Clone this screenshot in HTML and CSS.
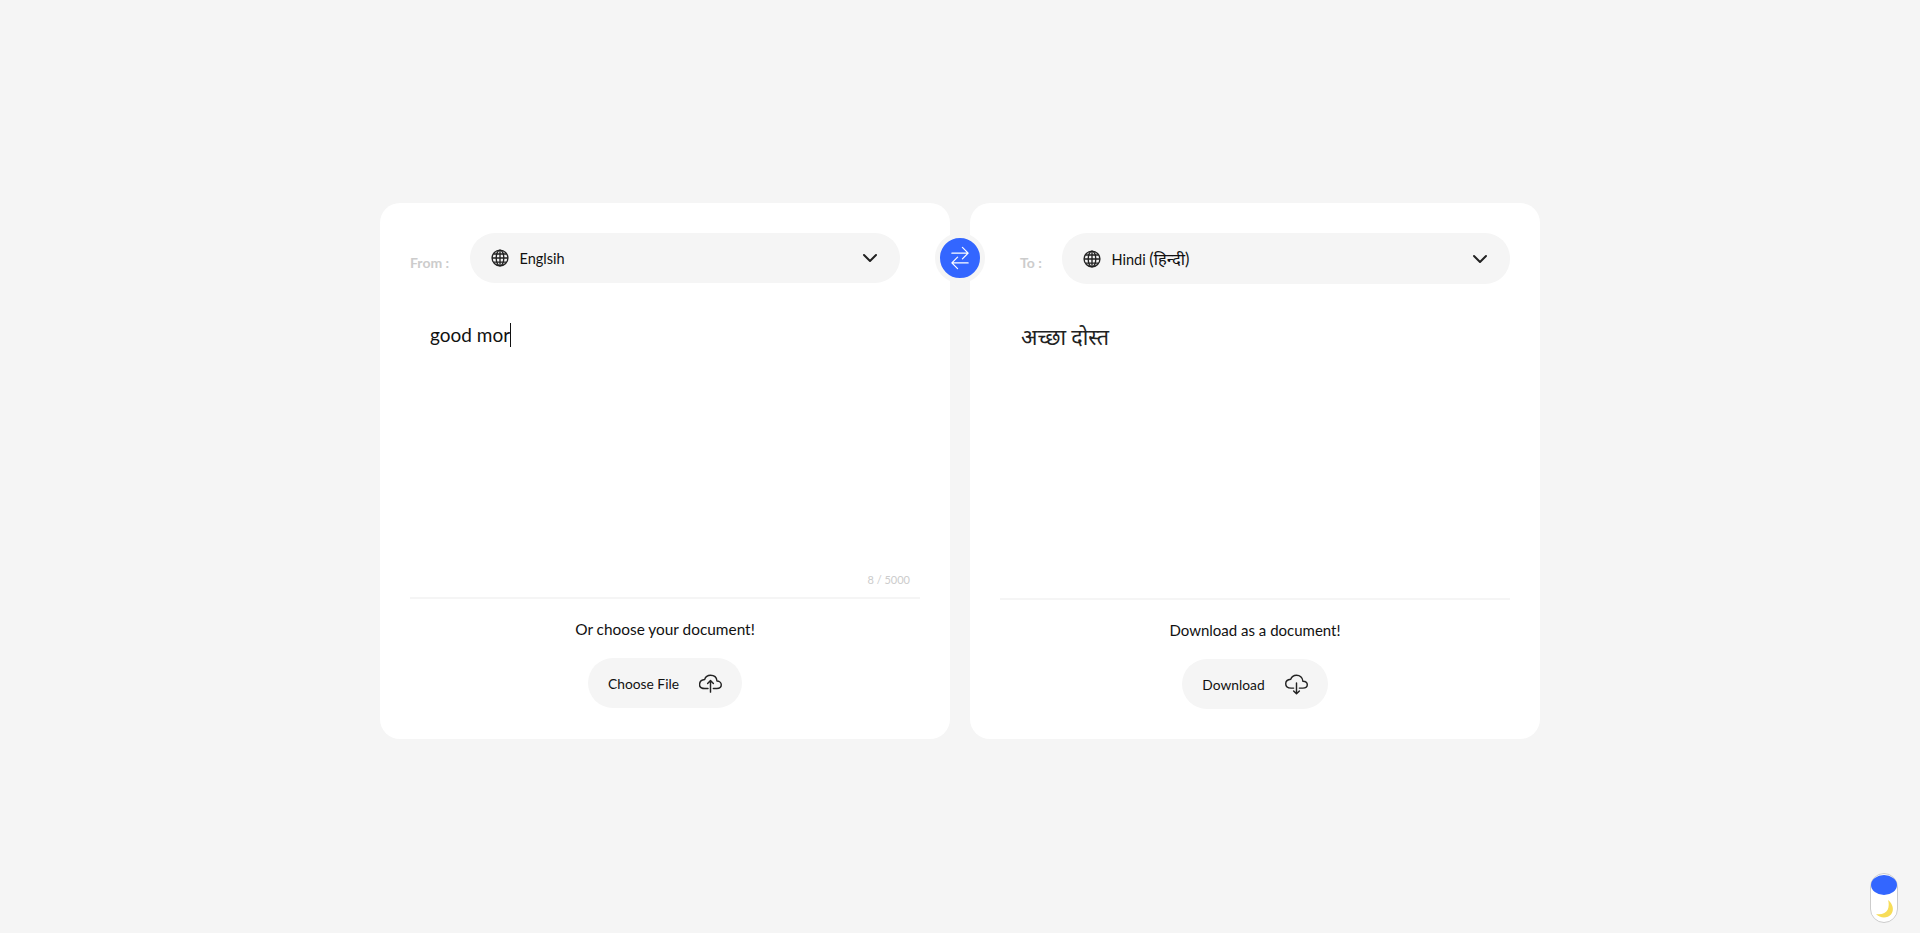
FILE: index.html
```html
<!DOCTYPE html>
<html lang="en">
<head>
<meta charset="UTF-8" />
<meta name="viewport" content="width=device-width, initial-scale=1" />
<title>Translator</title>
<link rel="stylesheet" href="styles.css">
</head>
<body>
<div class="container">
    <section class="card">
        <div class="card-head">
            <span class="lang-label">From :</span>
            <div class="lang-select lang-select-from">
                <svg class="globe" viewBox="0 0 20 20"><circle cx="10" cy="10" r="8.8"/><ellipse cx="10" cy="10" rx="4.2" ry="8.8"/><path d="M10 1.200v17.600M1.200 10h17.600M2.800 5.500h14.400M2.800 14.500h14.400"/></svg>
                <span class="lang-name">Englsih</span>
                <svg class="chevron" viewBox="0 0 16 10"><path d="M2 2l6 6 6-6"/></svg>
            </div>
        </div>
        <div class="card-body">
            <div class="source-text">good mor<span class="caret"></span></div>
            <div class="counter">8 / 5000</div>
        </div>
        <div class="card-foot">
            <p class="foot-text">Or choose your document!</p>
            <button class="file-btn" type="button">
                Choose File
                <svg class="cloud" viewBox="0 0 512 512"><path d="M320 367.79h76c55 0 100-29.21 100-83.6 0-53.76-53-81.6-96-83.6-8.89-85.3-70-127.59-144-127.59-70 0-115.09 46.21-130 92-61.44 5.84-114 44-114 119.19 0 75.21 56 83.6 120 83.6h68"/><path d="M320 255.79l-64-64-64 64M256 448.21V207.79"/></svg>
            </button>
        </div>
    </section>

    <button class="swap-btn" type="button" aria-label="Swap">
        <svg viewBox="0 0 512 512"><path d="M304 48l112 112-112 112M398.87 160H96M208 464L96 352l112-112M114 352h302"/></svg>
    </button>

    <section class="card card-to">
        <div class="card-head">
            <span class="lang-label">To :</span>
            <div class="lang-select">
                <svg class="globe" viewBox="0 0 20 20"><circle cx="10" cy="10" r="8.8"/><ellipse cx="10" cy="10" rx="4.2" ry="8.8"/><path d="M10 1.200v17.600M1.200 10h17.600M2.800 5.500h14.400M2.800 14.500h14.400"/></svg>
                <span class="lang-name">Hindi <span class="lang-native">(हिन्दी)</span></span>
                <svg class="chevron" viewBox="0 0 16 10"><path d="M2 2l6 6 6-6"/></svg>
            </div>
        </div>
        <div class="card-body">
            <div class="target-text">अच्छा दोस्त</div>
        </div>
        <div class="card-foot">
            <p class="foot-text">Download as a document!</p>
            <button class="file-btn" type="button">
                Download
                <svg class="cloud" viewBox="0 0 512 512"><path d="M320 336h76c55 0 100-21.21 100-75.6s-53-73.47-96-75.6C391.11 99.74 329 48 256 48c-69 0-113.44 45.79-128 91.2-60 5.7-112 35.88-112 98.4S70 336 136 336h56"/><path d="M192 400.1l64 63.9 64-63.9M256 224v224.03"/></svg>
            </button>
        </div>
    </section>
</div>

<div class="theme-toggle">
    <span class="toggle-knob"></span>
    <svg class="moon" viewBox="0 0 20 20"><path d="M13 1c5 4 6.500 10 3 14.500-3.500 4-11 4-15-.5 5 1 10-.5 11.800-4.500 1.200-3 1.200-6.500.2-9.500z"/></svg>
</div>
</body>
</html>
```

FILE: styles.css
```css
body { font-family: "Lato", "Noto Sans", sans-serif; background-color: #f5f5f5; margin: 0; color: #111; }
.container { position: relative; display: flex; justify-content: center; align-items: stretch; gap: 20px; padding-top: 203px; }
.card { width: 570px; height: 536px; box-sizing: border-box; background: white; border-radius: 20px; padding: 30px 30px 31px; display: flex; flex-direction: column; }
.card-to { padding-bottom: 30px; }
.card-head { display: flex; align-items: center; padding-right: 20px; }
.card-to .card-head { padding-right: 0; }
.lang-label { width: 60px; padding-top: 8px; font-size: 14px; font-weight: 700; color: #ccc; }
.card-to .lang-label { width: 42px; padding-left: 20px; }
.lang-select { flex: 1; height: 50px; box-sizing: border-box; padding: 0 22px 0 21px; border-radius: 25px; background-color: #f5f5f5; display: flex; align-items: center; font-size: 14.5px; }
.card-to .lang-select { height: 51px; }
.lang-name { flex: 1; margin-left: 10.5px; }
.lang-native { font-size: 16.5px; }
.globe { width: 18px; height: 18px; fill: none; stroke: #222; stroke-width: 1.5; }
.chevron { width: 16px; height: 10px; fill: none; stroke: #222; stroke-width: 2; stroke-linecap: round; stroke-linejoin: round; }
.card-body { flex: 1; display: flex; flex-direction: column; border-bottom: 2px solid #f5f5f5; }
.source-text { flex: 1; padding: 40px 0 0 20px; font-size: 19px; line-height: 24px; }
.caret { display: inline-block; height: 24px; border-left: 1px solid #111; vertical-align: top; }
.target-text { padding: 39px 0 0 21px; font-size: 21.5px; line-height: 30px; font-family: "Liberation Serif", "Noto Sans", serif; color: #222; }
.counter { padding: 0 10px 10px 0; text-align: right; font-size: 11px; line-height: 15px; color: #ccc; }
.card-foot { display: flex; flex-direction: column; align-items: center; }
.foot-text { margin: 21px 0 20px; font-size: 15.4px; line-height: 18px; }
.card-to .foot-text { font-size: 15px; }
.file-btn { height: 50px; padding: 0 20px; border: none; border-radius: 25px; background-color: #f5f5f5; display: flex; align-items: center; gap: 20px; font-family: inherit; font-size: 13.8px; color: #111; cursor: pointer; }
.cloud { width: 23px; height: 23px; fill: none; stroke: #222; stroke-width: 32; stroke-linecap: round; stroke-linejoin: round; }
.swap-btn { position: absolute; top: 233px; left: 50%; margin-left: -25px; width: 50px; height: 50px; box-sizing: border-box; padding: 0; border: 5px solid #f5f5f5; border-radius: 50%; background-color: #3366ff; display: flex; align-items: center; justify-content: center; cursor: pointer; }
.swap-btn svg { width: 26px; height: 26px; fill: none; stroke: white; stroke-width: 24; stroke-linecap: round; stroke-linejoin: round; }
.theme-toggle { position: fixed; right: 22px; bottom: 10px; width: 28px; height: 50px; box-sizing: border-box; border: 1px solid #ccc; border-radius: 14px; background: white; }
.toggle-knob { position: absolute; top: 1px; left: 0; width: 26px; height: 20px; border-radius: 50%; background-color: #3366ff; }
.moon { position: absolute; left: 4px; top: 25px; width: 20px; height: 20px; fill: #f7dd58; }
```
